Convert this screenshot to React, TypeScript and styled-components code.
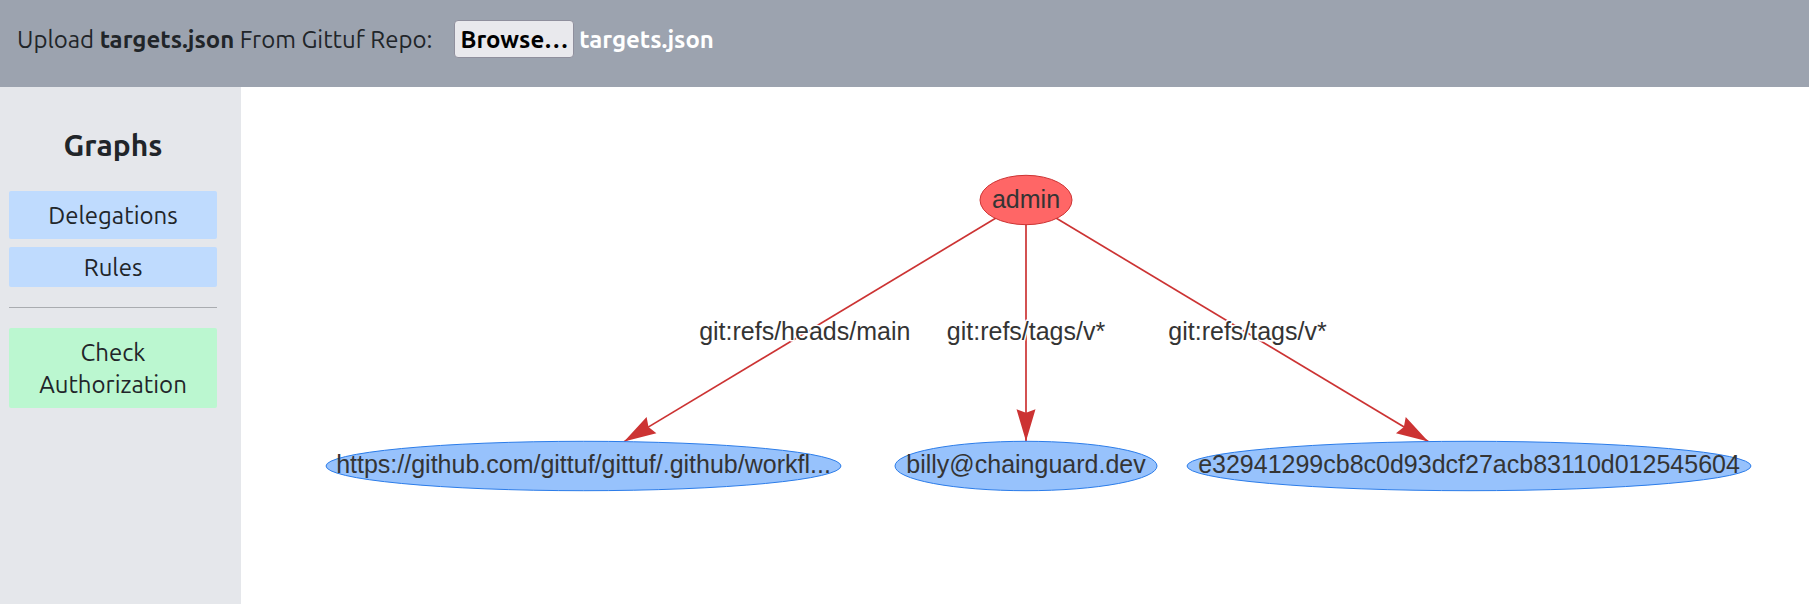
import React, { useRef, useState } from "react";
import styled, { createGlobalStyle } from "styled-components";

const GlobalStyle = createGlobalStyle`
  *, *::before, *::after { box-sizing: border-box; }
  body {
    margin: 0;
    background: #ffffff;
    color: #212529;
    font-family: Ubuntu, "Noto Sans", sans-serif;
    font-size: 24px;
    line-height: 32px;
  }
`;

const Page = styled.div`
  display: flex;
  flex-direction: column;
  min-height: 100vh;
`;

const Header = styled.header`
  display: flex;
  align-items: flex-start;
  padding: 20px 17px 29px;
  background: #9ca3af;
`;

const UploadLabel = styled.label`
  margin-right: 22px;
  padding: 4px 0 2px;
`;

const BrowseButton = styled.button`
  height: 38px;
  margin-right: 5px;
  padding: 1px 5px 0;
  border: 1px solid #8f8f9d;
  border-radius: 4px;
  background: #e9e9ed;
  color: #000000;
  font: inherit;
  font-weight: 700;
  cursor: pointer;
`;

const FileName = styled.output`
  padding: 4px 0 2px;
  color: #ffffff;
  font-weight: 700;
`;

const Body = styled.div`
  display: flex;
  flex: 1;
`;

const Sidebar = styled.nav`
  display: flex;
  flex: 0 0 241px;
  flex-direction: column;
  padding: 40px 24px 20px 9px;
  background: #e5e7eb;
`;

const Title = styled.h1`
  margin: 0 0 28px;
  font-size: 30px;
  line-height: 36px;
  text-align: center;
`;

const SideButton = styled.button<{ $tone: "blue" | "green"; $compact?: boolean }>`
  padding: ${(p) => (p.$compact ? "5px 16px 3px" : "9px 16px 7px")};
  border: 0;
  border-radius: 2px;
  background: ${(p) => (p.$tone === "blue" ? "#bfdbfe" : "#bbf7d0")};
  color: inherit;
  font: inherit;
  cursor: pointer;

  & + & { margin-top: 8px; }
`;

const Divider = styled.hr`
  width: 100%;
  height: 1px;
  margin: 20px 0;
  border: 0;
  background: #a9acb0;
`;

const GraphArea = styled.main`
  flex: 1;
  min-width: 0;
`;

const Graph = styled.svg`
  display: block;
  width: 100%;
  height: auto;
  font-family: "Liberation Sans", Arial, sans-serif;
  font-size: 25px;
`;

const NodeShape = styled.ellipse<{ $root?: boolean }>`
  fill: ${(p) => (p.$root ? "#ff6666" : "#97c2fc")};
  stroke: ${(p) => (p.$root ? "#cc3333" : "#2b7ce9")};
  stroke-width: 1px;
`;

const GraphText = styled.text`
  fill: #343434;
  text-anchor: middle;
`;

const EdgeText = styled(GraphText)`
  stroke: #ffffff;
  stroke-width: 3px;
  stroke-linejoin: round;
  paint-order: stroke;
`;

const root = { x: 785, y: 113, rx: 46, label: "admin" };

const people = [
  { x: 342.5, rx: 257.5, label: "https://github.com/gittuf/gittuf/.github/workfl...", rule: "git:refs/heads/main" },
  { x: 785, rx: 131, label: "billy@chainguard.dev", rule: "git:refs/tags/v*" },
  { x: 1228, rx: 282, label: "e32941299cb8c0d93dcf27acb83110d012545604", rule: "git:refs/tags/v*" },
];

const NODE_Y = 379;
const NODE_RY = 24.7;

/* Point where the straight line from the root meets the node's outline. */
function arrowTip(x: number, rx: number) {
  const dx = root.x - x;
  const dy = root.y - NODE_Y;
  const t = 1 / Math.sqrt((dx / rx) ** 2 + (dy / NODE_RY) ** 2);
  return { x: x + dx * t, y: NODE_Y + dy * t, angle: (Math.atan2(-dy, -dx) * 180) / Math.PI };
}

function Edge({ x, rx }: { x: number; rx: number }) {
  const tip = arrowTip(x, rx);
  return (
    <g stroke="none" fill="#cc3333">
      <line x1={root.x} y1={root.y} x2={tip.x} y2={tip.y} stroke="#cc3333" strokeWidth="1.7" />
      <path
        d="M0 0L-32 9.5L-28.5 0L-32 -9.5Z"
        transform={`translate(${tip.x} ${tip.y}) rotate(${tip.angle})`}
      />
    </g>
  );
}

export default function App() {
  const picker = useRef<HTMLInputElement>(null);
  const [fileName, setFileName] = useState("targets.json");

  return (
    <Page>
      <GlobalStyle />
      <Header>
        <UploadLabel htmlFor="browse">
          Upload <b>targets.json</b> From Gittuf Repo:
        </UploadLabel>
        <BrowseButton id="browse" type="button" onClick={() => picker.current?.click()}>
          Browse…
        </BrowseButton>
        <input
          ref={picker}
          type="file"
          accept=".json"
          hidden
          aria-label="targets.json"
          onChange={(e) => setFileName(e.target.files?.[0]?.name ?? fileName)}
        />
        <FileName htmlFor="browse">{fileName}</FileName>
      </Header>
      <Body>
        <Sidebar>
          <Title>Graphs</Title>
          <SideButton type="button" $tone="blue">Delegations</SideButton>
          <SideButton type="button" $tone="blue" $compact>Rules</SideButton>
          <Divider />
          <SideButton type="button" $tone="green">Check Authorization</SideButton>
        </Sidebar>
        <GraphArea>
          <Graph viewBox="0 0 1568 517" role="img" aria-label="Delegations">
            {people.map((p) => (
              <Edge key={p.label} x={p.x} rx={p.rx} />
            ))}
            {people.map((p) => (
              <EdgeText key={p.label} x={(root.x + p.x) / 2} y={253}>{p.rule}</EdgeText>
            ))}
            <NodeShape $root cx={root.x} cy={root.y} rx={root.rx} ry={NODE_RY} />
            <GraphText x={root.x} y={121}>{root.label}</GraphText>
            {people.map((p) => (
              <g key={p.label}>
                <NodeShape cx={p.x} cy={NODE_Y} rx={p.rx} ry={NODE_RY} />
                <GraphText x={p.x} y={386}>{p.label}</GraphText>
              </g>
            ))}
          </Graph>
        </GraphArea>
      </Body>
    </Page>
  );
}
